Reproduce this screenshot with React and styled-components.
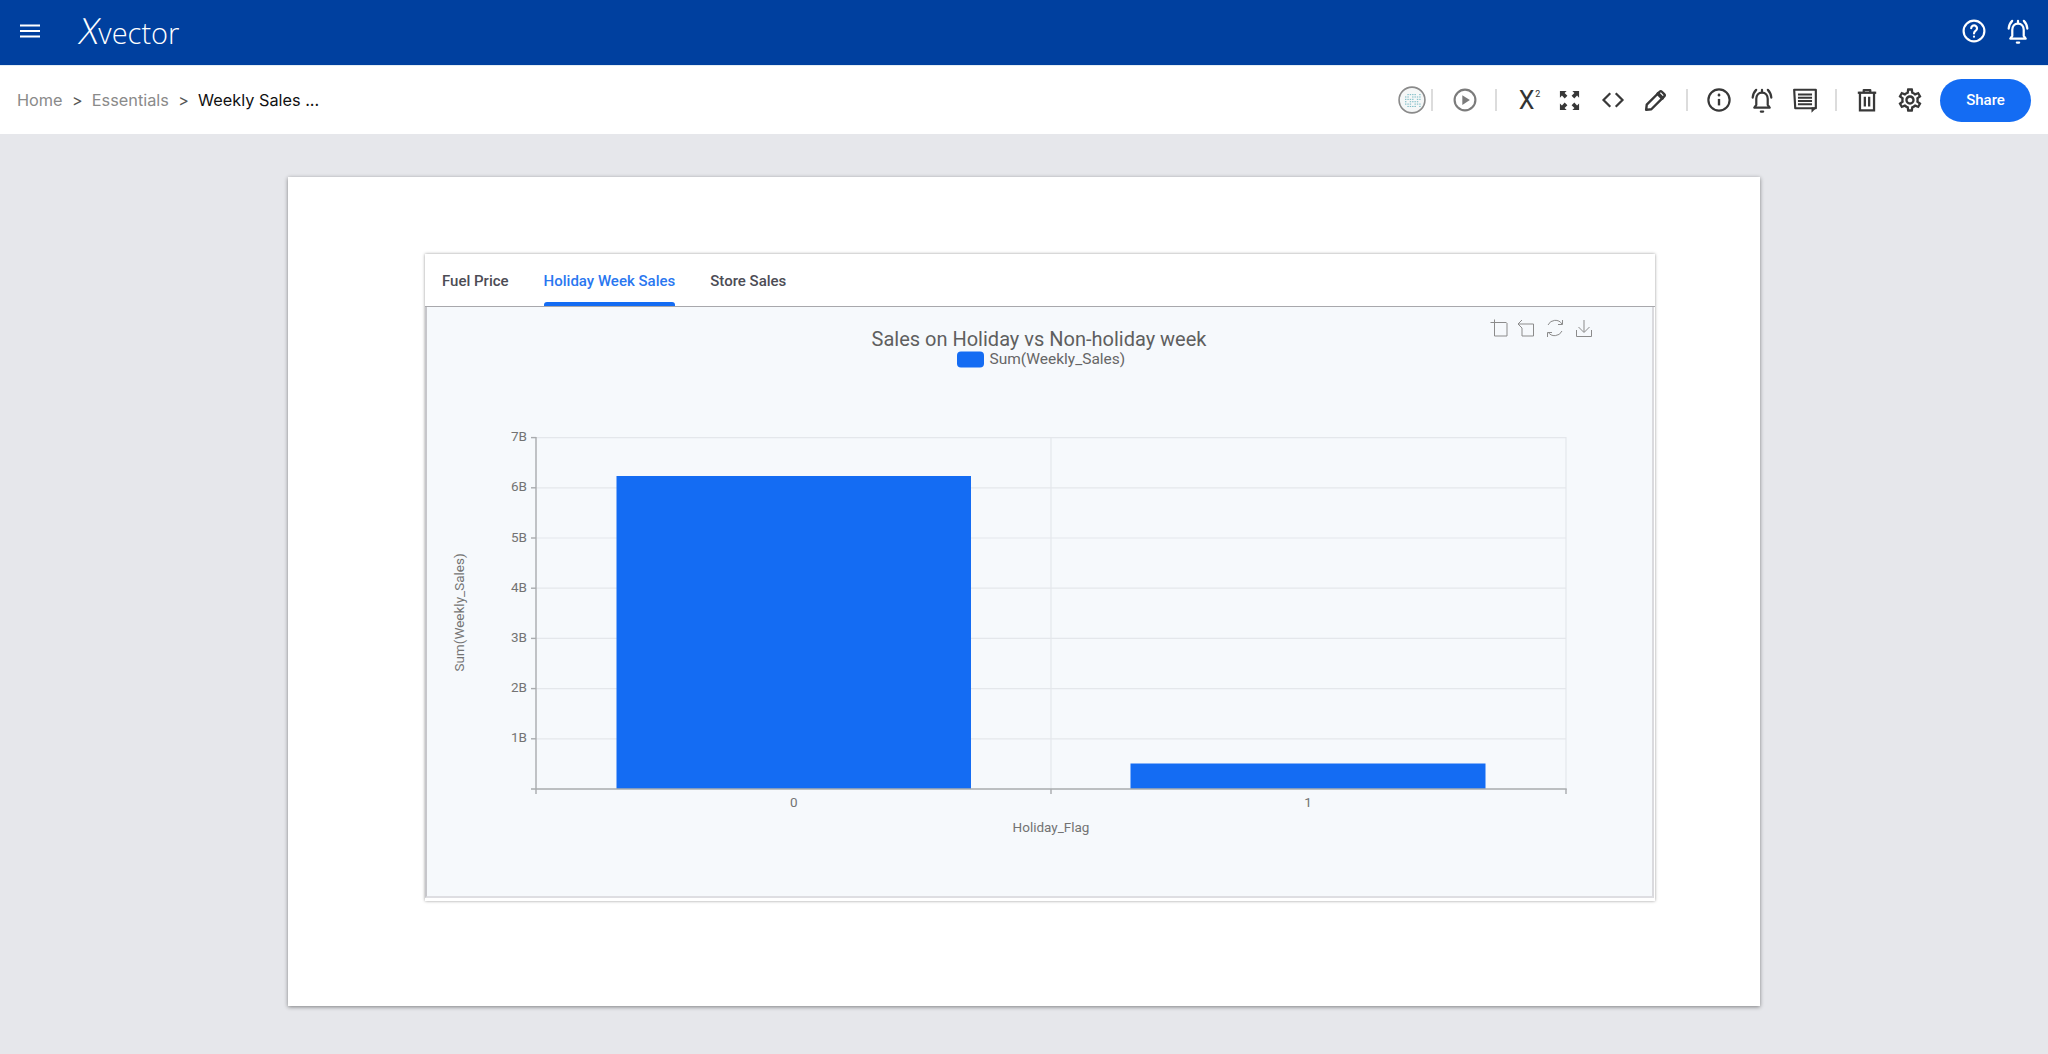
import styled, { createGlobalStyle } from 'styled-components';
import { MdOutlineSettings } from 'react-icons/md';

const GlobalStyle = createGlobalStyle`
  html, body { margin: 0; padding: 0; height: 100%; }
  body { font-family: Roboto, "Liberation Sans", sans-serif; background: #e6e7eb; }
  #root { height: 100%; }
`;

const Shell = styled.div`
  display: flex;
  flex-direction: column;
  height: 1054px;
  overflow: hidden;
`;

const TopBar = styled.header`
  display: flex;
  align-items: center;
  height: 65px;
  flex: none;
  box-sizing: border-box;
  padding: 0 16px 3px 20px;
  background: #00409f;
  color: #fff;
`;

const Logo = styled.div`
  display: flex;
  align-items: baseline;
  margin-left: 40px;
  font-family: "Open Sans", sans-serif;
  font-weight: 300;
  font-size: 29px;
  line-height: 1;
`;

const LogoX = styled.span`
  display: inline-block;
  font-size: 36px;
  margin-right: -1px;
  transform: skewX(-10deg);
`;

const TopActions = styled.div`
  display: flex;
  align-items: center;
  gap: 17px;
  margin-left: auto;
`;

const Crumbs = styled.div`
  display: flex;
  align-items: center;
  height: 69px;
  flex: none;
  padding: 0 17px 0 17px;
  background: #fff;
  border-top: 1px solid #e3edf5;
  box-sizing: border-box;
`;

const Crumb = styled.span`
  font-family: Inter, sans-serif;
  font-size: 16.3px;
  color: ${({ $current }) => ($current ? '#111' : '#8a8a8a')};
`;

const Chevron = styled.span`
  font-family: Inter, sans-serif;
  font-size: 16px;
  color: #555;
  margin: 0 9.3px;
`;

const Toolbar = styled.div`
  display: flex;
  align-items: center;
  margin-left: auto;
`;

const Slot = styled.div`
  display: flex;
  align-items: center;
  justify-content: center;
  width: ${({ $w }) => $w || 43}px;
  height: 43px;
  color: #383838;
`;

const Sep = styled.div`
  width: 2px;
  height: 22px;
  background: #dcdcdc;
  margin: 0 ${({ $mr }) => ($mr === undefined ? 8.5 : $mr)}px 0 ${({ $ml }) => ($ml === undefined ? 8.5 : $ml)}px;
`;

const Power = styled.div`
  font-size: 25px;
  line-height: 25px;
  color: #333;
  sup {
    font-size: 9px;
    line-height: 0;
    margin-left: 1px;
    vertical-align: 12px;
  }
`;

const ShareButton = styled.button`
  width: 91px;
  height: 43px;
  margin-left: 8.5px;
  border: none;
  border-radius: 22px;
  background: #146cf3;
  color: #fff;
  font-family: Roboto, sans-serif;
  font-size: 15px;
  font-weight: 500;
`;

const Main = styled.main`
  flex: 1;
  display: flex;
  justify-content: center;
  align-items: flex-start;
  padding-top: 43px;
`;

const Sheet = styled.section`
  width: 1472px;
  height: 829px;
  box-sizing: border-box;
  padding: 77px 105px 0 137px;
  background: #fff;
  box-shadow: 0 1px 4px rgba(0, 0, 0, 0.45);
`;

const Card = styled.div`
  display: flex;
  flex-direction: column;
  height: 647px;
  background: #fff;
  box-shadow: 0 0 3px rgba(0, 0, 0, 0.4);
`;

const Tabs = styled.nav`
  display: flex;
  gap: 35px;
  height: 53px;
  flex: none;
  box-sizing: border-box;
  padding: 0 0 0 17px;
  border-bottom: 1px solid #a8a8ac;
`;

const Tab = styled.div`
  position: relative;
  display: flex;
  align-items: center;
  padding-top: 2px;
  font-size: 15px;
  font-weight: 500;
  color: ${({ $active }) => ($active ? '#2a77f0' : '#4c4c55')};

  ${({ $active }) => $active && `
    &::after {
      content: '';
      position: absolute;
      left: 0;
      right: 0;
      bottom: 0;
      height: 4px;
      background: #146cf3;
      border-radius: 3px 3px 0 0;
    }
  `}
`;

const ChartFrame = styled.div`
  flex: 1;
  min-height: 0;
  margin: 0 1px 3px 0;
  background: #f6f9fc;
  border-left: 2px solid #c6c6ca;
  border-right: 2px solid #dadade;
  border-bottom: 2px solid #dedee2;
`;

const ChartSvg = styled.svg`
  display: block;
  width: 100%;
  height: 100%;
  font-family: Roboto, sans-serif;
`;

const AXIS_BOTTOM = 789;
const AXIS_LEFT = 536;
const AXIS_RIGHT = 1566;
const STEP = 50.2;
const TICKS = [1, 2, 3, 4, 5, 6, 7];
const BARS = [
  { label: '0', x: 616.5, width: 354.5, top: 476 },
  { label: '1', x: 1130.5, width: 355, top: 763.5 },
];

function Ico({ size = 26, children, strokeWidth = 2 }) {
  return (
    <svg width={size} height={size} viewBox="0 0 24 24" fill="none" stroke="currentColor" strokeWidth={strokeWidth} strokeLinecap="round" strokeLinejoin="round">
      {children}
    </svg>
  );
}

const HelpIcon = () => (
  <Ico>
    <circle cx="12" cy="12" r="9.6" />
    <path d="M9.4 9.4a2.7 2.7 0 1 1 4.2 2.3c-1 .7-1.6 1.2-1.6 2.5" />
    <path d="M12 17.2v.1" />
  </Ico>
);

const InfoIcon = () => (
  <Ico>
    <circle cx="12" cy="12" r="9.8" />
    <path d="M12 11v6" strokeWidth="2.2" strokeLinecap="butt" />
    <path d="M12 7.2v.3" strokeWidth="2.4" />
  </Ico>
);

const AlarmIcon = () => (
  <Ico size={28} strokeWidth={1.9}>
    <path d="M12 5.6c-3.1 0-4.9 2.4-4.9 5.4v5.2L5.4 18.600h13.200l-1.700-2.400V11c0-3-1.800-5.400-4.900-5.400z" />
    <path d="M11 21.900h2" />
    <path d="M4 10c.2-2.600 1.200-4.900 3-6.700" />
    <path d="M20 10c-.2-2.600-1.200-4.900-3-6.700" />
    <path d="M12 3.400v1.800" />
  </Ico>
);

const PlayIcon = () => (
  <svg width="26" height="26" viewBox="0 0 24 24">
    <circle cx="12" cy="12" r="9.6" fill="none" stroke="#7b7b7b" strokeWidth="2" />
    <path d="M9.500 7.500l7 4.500-7 4.500z" fill="#7b7b7b" />
  </svg>
);

const ExpandIcon = () => (
  <svg width="23" height="23" viewBox="0 0 24 24" fill="#383838">
    <path d="M2 2h7L6.900 4.100 9.800 7 7 9.800 4.100 6.900 2 9z" />
    <path d="M22 2h-7l2.100 2.100L14.200 7 17 9.800l2.900-2.900L22 9z" />
    <path d="M2 22h7l-2.100-2.100L9.800 17 7 14.200l-2.900 2.900L2 15z" />
    <path d="M22 22h-7l2.100-2.100L14.200 17 17 14.200l2.900 2.900L22 15z" />
  </svg>
);

const CodeIcon = () => (
  <Ico size={24} strokeWidth={2.2}>
    <path d="M8.500 6l-6 6 6 6" strokeLinecap="square" strokeLinejoin="miter" />
    <path d="M15.500 6l6 6-6 6" strokeLinecap="square" strokeLinejoin="miter" />
  </Ico>
);

const PencilIcon = () => (
  <Ico size={25} strokeWidth={2.3}>
    <path d="M3 21l.6-5L16 3.600a1.500 1.500 0 0 1 2.100 0l2.300 2.300a1.500 1.500 0 0 1 0 2.100L8 20.400z" />
    <path d="M14.500 5.500l4 4" strokeWidth="3.400" />
  </Ico>
);

const CommentIcon = () => (
  <svg width="26" height="26" viewBox="0 0 24 24" fill="none" stroke="#383838">
    <path d="M2 2.500h20V19.600H3z" strokeWidth="2" strokeLinejoin="round" />
    <path d="M5.500 7h13M5.500 10h13M5.500 13h13M5.500 16h13" strokeWidth="1.800" />
    <path d="M18.500 19v3.500L22 19" fill="#383838" strokeWidth="1" />
  </svg>
);

const TrashIcon = () => (
  <Ico size={26} strokeWidth={2.1}>
    <path d="M3.500 5.300h17" strokeLinecap="butt" />
    <path d="M9 5V2.800h6V5" strokeLinecap="butt" />
    <path d="M5.500 5.500v16h13v-16" strokeLinejoin="miter" />
    <path d="M10 9v9M14 9v9" strokeLinecap="butt" />
  </Ico>
);

// little round thumbnail shown in the toolbar
const ThumbIcon = () => {
  const dots = [];
  for (let r = 0; r < 6; r++) {
    for (let c = 0; c < 7; c++) {
      if ((r + c * 2) % 5 !== 0) dots.push({ x: 6.5 + c * 2.2, y: 7.5 + r * 2.2 });
    }
  }
  return (
    <svg width="28" height="28" viewBox="0 0 26 26">
      <circle cx="13" cy="13" r="12" fill="#f5f7f7" stroke="#8a8a8a" strokeWidth="1.500" />
      {dots.map((d, i) => (
        <rect key={i} x={d.x} y={d.y} width="1.300" height="1" fill="#7dbcc6" />
      ))}
    </svg>
  );
};

function Chart() {
  return (
    <ChartSvg viewBox="427 307 1225 589" preserveAspectRatio="none">
      <text x="1039" y="346" textAnchor="middle" fontSize="20" fill="#5f5f5f">Sales on Holiday vs Non-holiday week</text>
      <rect x="957" y="351.500" width="27" height="16" rx="4" fill="#146cf3" />
      <text x="989.500" y="363.500" fontSize="15.500" fill="#666">Sum(Weekly_Sales)</text>

      <g fill="none" stroke="#8b8b8b" strokeWidth="1" transform="translate(-1 -1)">
        <path d="M1491.500 323.500h16M1495.500 320.500v2.500M1495.500 324v13h12.500V324" />
        <path d="M1519 325l4-4M1519 325l4 4M1520 325h14.500v12h-11.500v-8" />
        <path d="M1549 326a8 8 0 0 1 14 -1M1563 332a8 8 0 0 1 -14 1" />
        <path d="M1563.500 321v4.500h-4.500M1548.500 338v-4.500h4.500" />
        <path d="M1585 321v12M1579.500 328l5.500 5.500 5.500-5.500M1577.500 331v6.500h15V331" />
      </g>

      {TICKS.map((t) => (
        <line key={t} x1={AXIS_LEFT} x2={AXIS_RIGHT} y1={AXIS_BOTTOM - t * STEP} y2={AXIS_BOTTOM - t * STEP} stroke="#e4e7eb" strokeWidth="1.200" />
      ))}
      <line x1="1051" x2="1051" y1="437" y2={AXIS_BOTTOM} stroke="#e4e7eb" strokeWidth="1.200" />
      <line x1={AXIS_RIGHT} x2={AXIS_RIGHT} y1="437" y2={AXIS_BOTTOM} stroke="#e4e7eb" strokeWidth="1.200" />

      {BARS.map((b) => (
        <rect key={b.label} x={b.x} y={b.top} width={b.width} height={AXIS_BOTTOM - b.top} fill="#146cf3" />
      ))}

      <g stroke="#a9abae" strokeWidth="1.400" fill="none">
        <line x1={AXIS_LEFT} x2={AXIS_LEFT} y1="437" y2="794" />
        <line x1="531" x2={AXIS_RIGHT + 0.7} y1={AXIS_BOTTOM} y2={AXIS_BOTTOM} />
        <line x1="1051" x2="1051" y1={AXIS_BOTTOM} y2="794" />
        <line x1={AXIS_RIGHT} x2={AXIS_RIGHT} y1={AXIS_BOTTOM} y2="794" />
        {TICKS.map((t) => (
          <line key={t} x1="531" x2={AXIS_LEFT} y1={AXIS_BOTTOM - t * STEP} y2={AXIS_BOTTOM - t * STEP} />
        ))}
      </g>

      <g fontSize="13.500" fill="#737373">
        {TICKS.map((t) => (
          <text key={t} x="527" y={AXIS_BOTTOM - t * STEP + 3.5} textAnchor="end">{t}B</text>
        ))}
        {BARS.map((b) => (
          <text key={b.label} x={b.x + b.width / 2} y="807" textAnchor="middle">{b.label}</text>
        ))}
        <text x="1051" y="832" textAnchor="middle">Holiday_Flag</text>
        <text transform="translate(464 612.500) rotate(-90)" textAnchor="middle">Sum(Weekly_Sales)</text>
      </g>
    </ChartSvg>
  );
}

export default function App() {
  return (
    <>
      <GlobalStyle />
      <Shell>
        <TopBar>
          <svg width="20" height="14" viewBox="0 0 20 14" stroke="#fff" strokeWidth="2">
            <path d="M0 1.500h20M0 7h20M0 12.500h20" />
          </svg>
          <Logo><LogoX>X</LogoX>vector</Logo>
          <TopActions>
            <HelpIcon />
            <AlarmIcon />
          </TopActions>
        </TopBar>

        <Crumbs>
          <Crumb>Home</Crumb>
          <Chevron>&gt;</Chevron>
          <Crumb>Essentials</Crumb>
          <Chevron>&gt;</Chevron>
          <Crumb $current>Weekly Sales ...</Crumb>
          <Toolbar>
            <Slot $w={30}><ThumbIcon /></Slot>
            <Sep $ml={4.7} $mr={9.8} />
            <Slot><PlayIcon /></Slot>
            <Sep $mr={14.5} />
            <Slot $w={37}><Power>X<sup>2</sup></Power></Slot>
            <Slot><ExpandIcon /></Slot>
            <Slot><CodeIcon /></Slot>
            <Slot><PencilIcon /></Slot>
            <Sep $mr={10} />
            <Slot><InfoIcon /></Slot>
            <Slot><AlarmIcon /></Slot>
            <Slot><CommentIcon /></Slot>
            <Sep />
            <Slot><TrashIcon /></Slot>
            <Slot><MdOutlineSettings size={28} /></Slot>
            <ShareButton>Share</ShareButton>
          </Toolbar>
        </Crumbs>

        <Main>
          <Sheet>
            <Card>
              <Tabs>
                <Tab>Fuel Price</Tab>
                <Tab $active>Holiday Week Sales</Tab>
                <Tab>Store Sales</Tab>
              </Tabs>
              <ChartFrame>
                <Chart />
              </ChartFrame>
            </Card>
          </Sheet>
        </Main>
      </Shell>
    </>
  );
}
